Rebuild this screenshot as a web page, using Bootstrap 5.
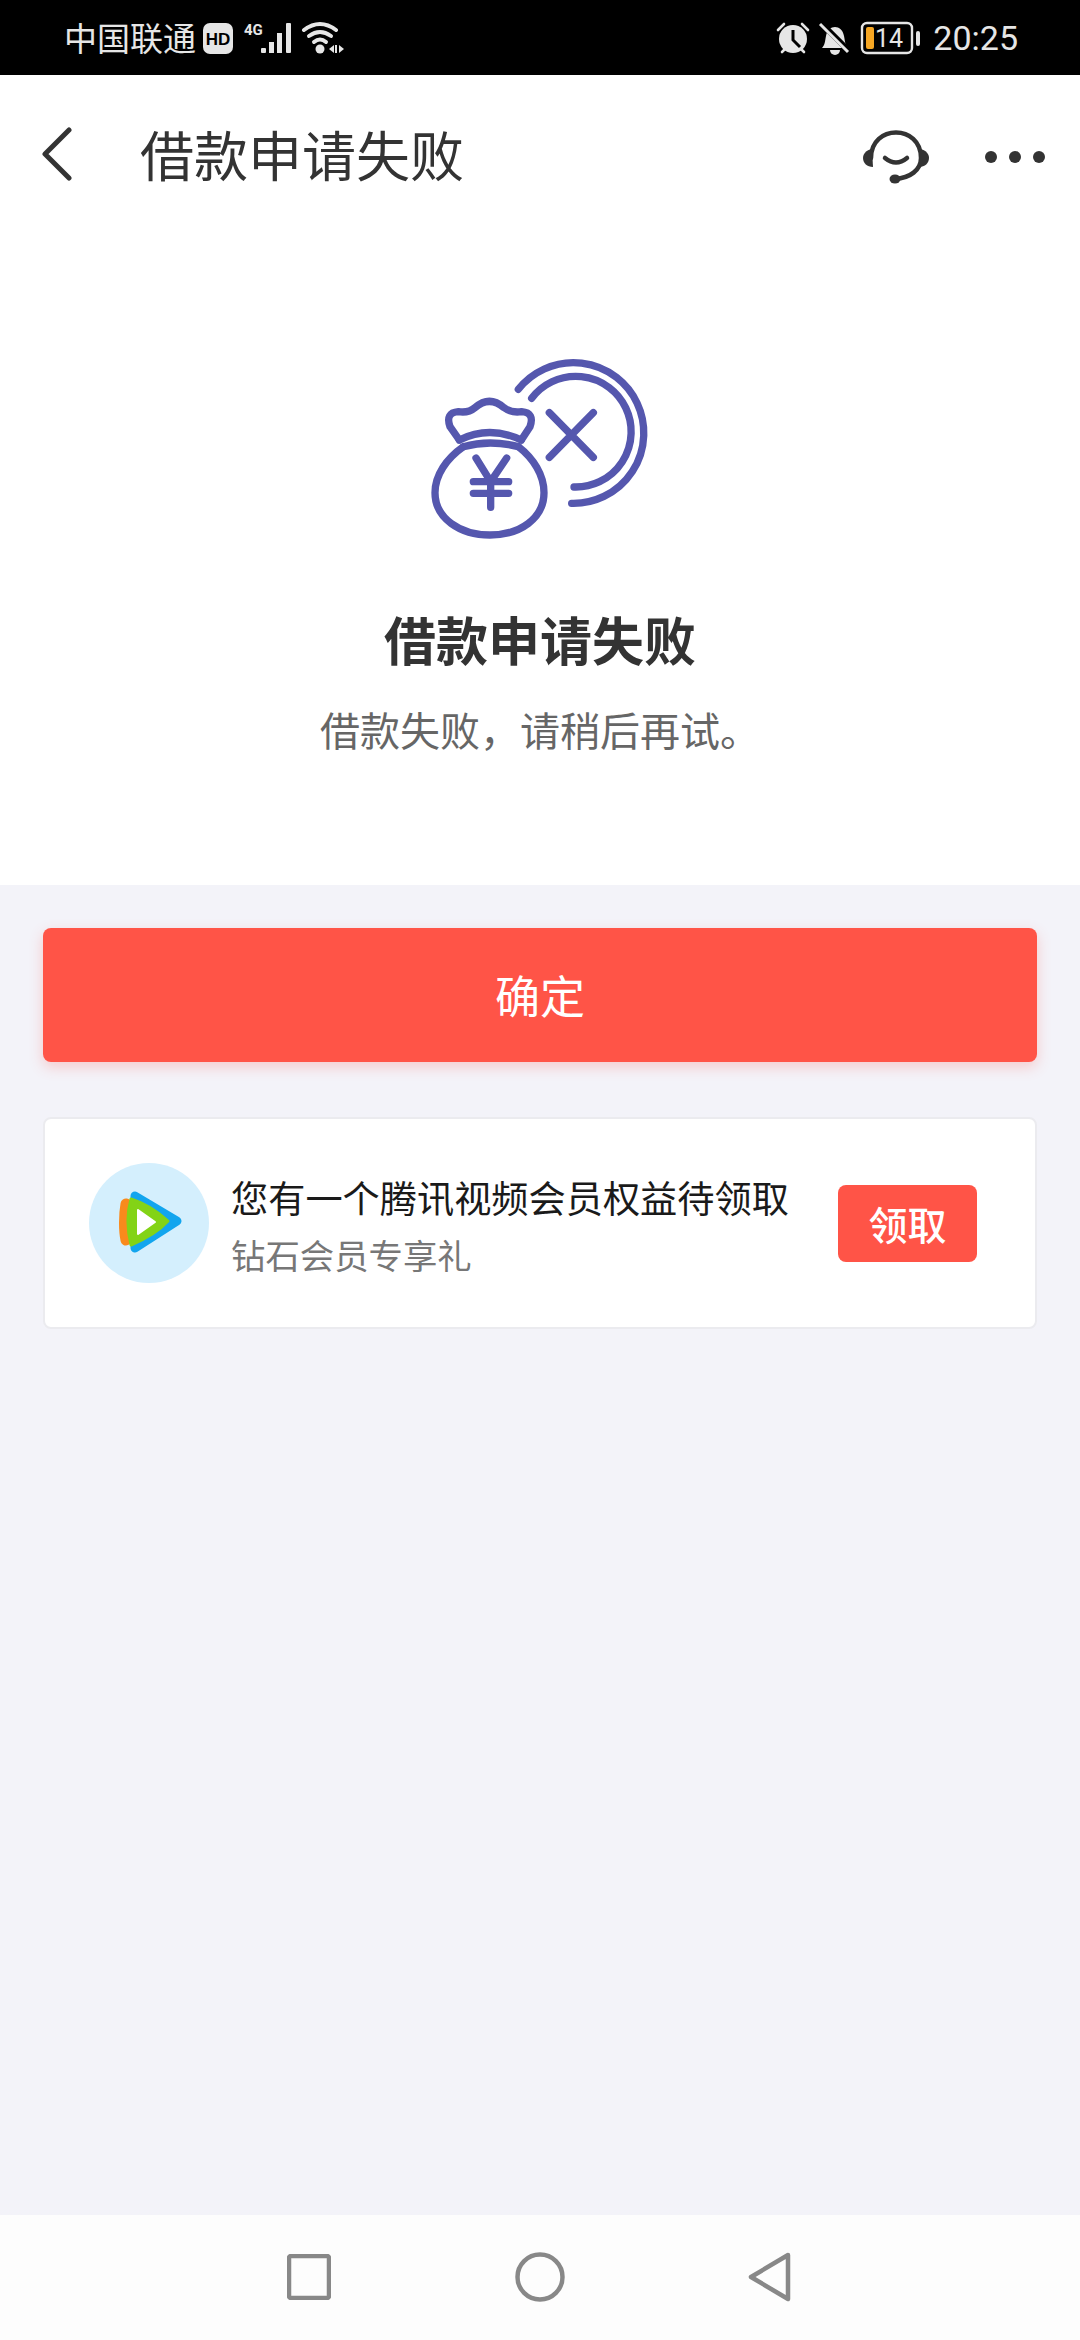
<!DOCTYPE html>
<html lang="zh-CN">

<head>
    <meta charset="UTF-8">
    <meta name="viewport" content="width=device-width, initial-scale=1.0">
    <title>借款申请失败</title>
    <link href="https://cdn.jsdelivr.net/npm/bootstrap@5.3.2/dist/css/bootstrap.min.css" rel="stylesheet">
    <style>
        body {
            width: 1080px;
            height: 2340px;
            background-color: #f3f3f9;
            font-family: "Noto Sans CJK SC", "Noto Sans", sans-serif;
            overflow: hidden;
        }

        .page-wrap {
            height: 2340px;
        }

        /* status bar */
        .status-bar {
            height: 75px;
            background-color: #000;
            color: #e6e6e6;
            padding: 0 62px 0 64px;
        }

        .carrier {
            font-size: 33px;
            line-height: 1;
        }

        .clock {
            font-family: Roboto, sans-serif;
            font-size: 34px;
            line-height: 1;
            margin-left: 12px;
        }

        .batt-num {
            font-family: Roboto, sans-serif;
            font-size: 25px;
        }

        /* header */
        .top-bar {
            height: 145px;
            background-color: #fff;
            padding: 12px 35px 0 42px;
        }

        .top-title {
            font-size: 54px;
            line-height: 1;
            color: #333;
            margin-left: 68px;
        }

        .head-tools {
            padding-top: 6px;
        }

        .head-dots {
            margin-left: 55px;
        }

        /* result block */
        .result-box {
            background-color: #fff;
            height: 665px;
            padding-top: 120px;
        }

        .result-title {
            font-size: 52px;
            font-weight: 700;
            color: #333;
            line-height: 1;
            margin-top: 53px;
        }

        .result-sub {
            font-size: 40px;
            color: #666;
            line-height: 1;
            margin-top: 44px;
        }

        /* button + card */
        .content-box {
            padding: 43px 43px 0 43px;
        }

        .btn-ok {
            display: block;
            width: 100%;
            height: 134px;
            background-color: #ff5447;
            border: 0;
            border-radius: 8px;
            color: #fff;
            font-size: 45px;
            box-shadow: 0 5px 14px rgba(255, 84, 71, 0.25);
        }

        .vip-card {
            height: 212px;
            margin-top: 55px;
            border: 2px solid #ebebef;
            border-radius: 8px;
            padding: 2px 58px 0 44px;
        }

        .vip-logo {
            width: 120px;
            height: 120px;
            margin-top: -2px;
        }

        .vip-info {
            margin-left: 22px;
            padding-top: 3px;
        }

        .vip-title {
            font-size: 37.2px;
            line-height: 1;
            color: #1a1a1a;
        }

        .vip-sub {
            font-size: 34.4px;
            line-height: 1;
            color: #777;
            margin-top: 21px;
        }

        .vip-btn {
            width: 139px;
            height: 77px;
            margin-top: -2px;
            background-color: #ff5447;
            border: 0;
            border-radius: 8px;
            color: #fff;
            font-size: 39px;
            font-weight: 500;
            padding: 0;
        }

        /* bottom nav */
        .sys-nav {
            height: 125px;
            background-color: #fdfdfd;
            padding: 0 288px 2px 287px;
        }
    </style>
</head>

<body>
    <div class="page-wrap d-flex flex-column">
        <!-- Status bar -->
        <div class="status-bar d-flex align-items-center justify-content-between flex-shrink-0">
            <div class="d-flex align-items-center">
                <span class="carrier">中国联通</span>
                <svg width="146" height="36" viewBox="0 0 146 36" class="ms-1">
                    <rect x="3" y="3" width="30" height="31" rx="7" fill="#e6e6e6"/>
                    <text x="18" y="25" font-family="Liberation Sans, sans-serif" font-size="17" font-weight="700" text-anchor="middle" fill="#000">HD</text>
                    <text x="44" y="15" font-family="Roboto, sans-serif" font-size="15" font-weight="700" fill="#e6e6e6">4G</text>
                    <g fill="#e6e6e6">
                        <rect x="61" y="28" width="5" height="5" rx="1"/>
                        <rect x="69" y="22" width="5" height="11"/>
                        <rect x="77" y="13" width="5" height="20"/>
                        <rect x="86" y="3" width="5" height="30" rx="1"/>
                        <circle cx="120" cy="29" r="4.5"/>
                        <path d="M129 29l5-4v8zM135 25h2v8h-2zM139 25l5 4-5 4z"/>
                    </g>
                    <g fill="none" stroke="#e6e6e6" stroke-width="4" stroke-linecap="round">
                        <path d="M104 10 Q120 -2 136 10"/>
                        <path d="M109 16 Q120 8 131 16"/>
                        <path d="M114 22 Q120 17 126 22"/>
                    </g>
                </svg>
            </div>
            <div class="d-flex align-items-center">
                <svg width="145" height="36" viewBox="0 0 145 36">
                    <!-- alarm -->
                    <circle cx="17" cy="19" r="14" fill="#e6e6e6"/>
                    <path d="M17 10v10l7 7" fill="none" stroke="#000" stroke-width="3"/>
                    <path d="M2 10l6-6M26 4l6 6M6 32l3-3M28 32l-3-3" stroke="#e6e6e6" stroke-width="2.6" stroke-linecap="round"/>
                    <!-- bell -->
                    <path d="M46 28c3-3 3-7 4-12 1-6 5-9 9-9s8 3 9 9c1 5 1 9 4 12z" fill="#e6e6e6"/>
                    <path d="M54 30a5 5 0 0 0 10 0z" fill="#e6e6e6"/>
                    <path d="M46 4l28 28" stroke="#000" stroke-width="6"/>
                    <path d="M44 4l28 28" stroke="#e6e6e6" stroke-width="3"/>
                    <!-- battery -->
                    <rect x="86" y="3" width="50" height="30" rx="5" fill="none" stroke="#e6e6e6" stroke-width="2.4"/>
                    <rect x="90" y="7" width="8" height="22" rx="2" fill="#f5a623"/>
                    <rect x="140" y="11" width="4" height="15" rx="2" fill="#e6e6e6"/>
                    <text x="113" y="27" class="batt-num" text-anchor="middle" fill="#e6e6e6">14</text>
                </svg>
                <span class="clock">20:25</span>
            </div>
        </div>

        <!-- Header -->
        <div class="top-bar d-flex align-items-center flex-shrink-0">
            <svg width="30" height="54" viewBox="0 0 30 54">
                <path d="M27 3 L3 27 L27 51" fill="none" stroke="#333" stroke-width="5" stroke-linecap="round" stroke-linejoin="round"/>
            </svg>
            <span class="top-title">借款申请失败</span>
            <div class="head-tools ms-auto d-flex align-items-center">
                <svg width="68" height="58" viewBox="0 0 68 58">
                    <path d="M9 30 C9 -4 59 -4 59 30 C59 42 48 50 33 51" fill="none" stroke="#333" stroke-width="4.5" stroke-linecap="round"/>
                    <path d="M10 21 C4 22 1 26 1 30 C1 35 5 39 11 39z" fill="#333"/>
                    <path d="M58 21 C64 22 67 26 67 30 C67 35 63 39 57 39z" fill="#333"/>
                    <ellipse cx="33" cy="51" rx="5.5" ry="4.5" fill="#333"/>
                    <path d="M23 30 Q34 39 45 30" fill="none" stroke="#333" stroke-width="4.5" stroke-linecap="round"/>
                </svg>
                <svg width="60" height="14" viewBox="0 0 60 14" class="head-dots">
                    <circle cx="6" cy="7" r="6" fill="#333"/>
                    <circle cx="30" cy="7" r="6" fill="#333"/>
                    <circle cx="54" cy="7" r="6" fill="#333"/>
                </svg>
            </div>
        </div>

        <!-- Result -->
        <div class="result-box text-center flex-shrink-0">
            <svg width="280" height="220" viewBox="0 0 840 660">
                <g fill="none" stroke="#5557ae" stroke-width="22" stroke-linecap="round" stroke-linejoin="round">
                    <path d="M355 148 A211 211 0 1 1 515 490"/>
                    <path d="M395 175 A166 166 0 1 1 522 441"/>
                    <path d="M448 218 L580 352 M580 218 L448 352"/>
                    <path d="M190 320 C140 355 105 405 105 458 C105 535 180 585 270 585 C360 585 432 535 432 458 C432 405 400 355 355 320"/>
                    <path d="M190 320 Q270 298 355 320"/>
                    <path d="M178 300 Q268 255 364 300"/>
                    <path d="M178 300 L150 260 Q135 218 175 215 Q205 220 225 203 Q268 165 312 203 Q335 220 365 215 Q405 218 390 260 L364 300"/>
                    <path d="M228 354 L272 425 L320 354 M272 425 V502 M220 425 H326 M220 460 H326"/>
                </g>
            </svg>
            <div class="result-title">借款申请失败</div>
            <div class="result-sub">借款失败，请稍后再试。</div>
        </div>

        <!-- Actions -->
        <div class="content-box flex-grow-1">
            <button type="button" class="btn btn-ok">确定</button>
            <div class="card vip-card flex-row align-items-center">
                <svg class="vip-logo flex-shrink-0" viewBox="0 0 120 120">
                    <circle cx="60" cy="60" r="60" fill="#d4effd"/>
                    <path d="M46 33 L88 58 L46 85z" fill="#12a5ee" stroke="#12a5ee" stroke-width="9" stroke-linejoin="round"/>
                    <path d="M37 41 C35 52 35 68 37 77" fill="none" stroke="#f98a1c" stroke-width="11" stroke-linecap="round"/>
                    <path d="M42 36 C58 41 70 50 79 58 C70 68 56 76 42 82 C38 66 38 50 42 36z" fill="#83d316" stroke="#83d316" stroke-width="3" stroke-linejoin="round"/>
                    <path d="M49 47 L66 59 L49 71z" fill="#fff" stroke="#fff" stroke-width="2" stroke-linejoin="round"/>
                </svg>
                <div class="vip-info flex-grow-1">
                    <div class="vip-title">您有一个腾讯视频会员权益待领取</div>
                    <div class="vip-sub">钻石会员专享礼</div>
                </div>
                <button type="button" class="btn vip-btn flex-shrink-0">领取</button>
            </div>
        </div>

        <!-- System nav -->
        <div class="sys-nav d-flex align-items-center justify-content-between flex-shrink-0">
            <svg width="44" height="46" viewBox="0 0 44 46">
                <rect x="2" y="2" width="40" height="42" rx="2" fill="none" stroke="#888" stroke-width="4.5"/>
            </svg>
            <svg width="50" height="50" viewBox="0 0 50 50">
                <circle cx="25" cy="25" r="22.5" fill="none" stroke="#888" stroke-width="4.5"/>
            </svg>
            <svg width="44" height="50" viewBox="0 0 44 50">
                <path d="M40 3 L3 25 L40 47z" fill="none" stroke="#888" stroke-width="4.5" stroke-linejoin="round"/>
            </svg>
        </div>
    </div>

    <script src="https://cdn.jsdelivr.net/npm/bootstrap@5.3.2/dist/js/bootstrap.bundle.min.js"></script>
</body>

</html>
